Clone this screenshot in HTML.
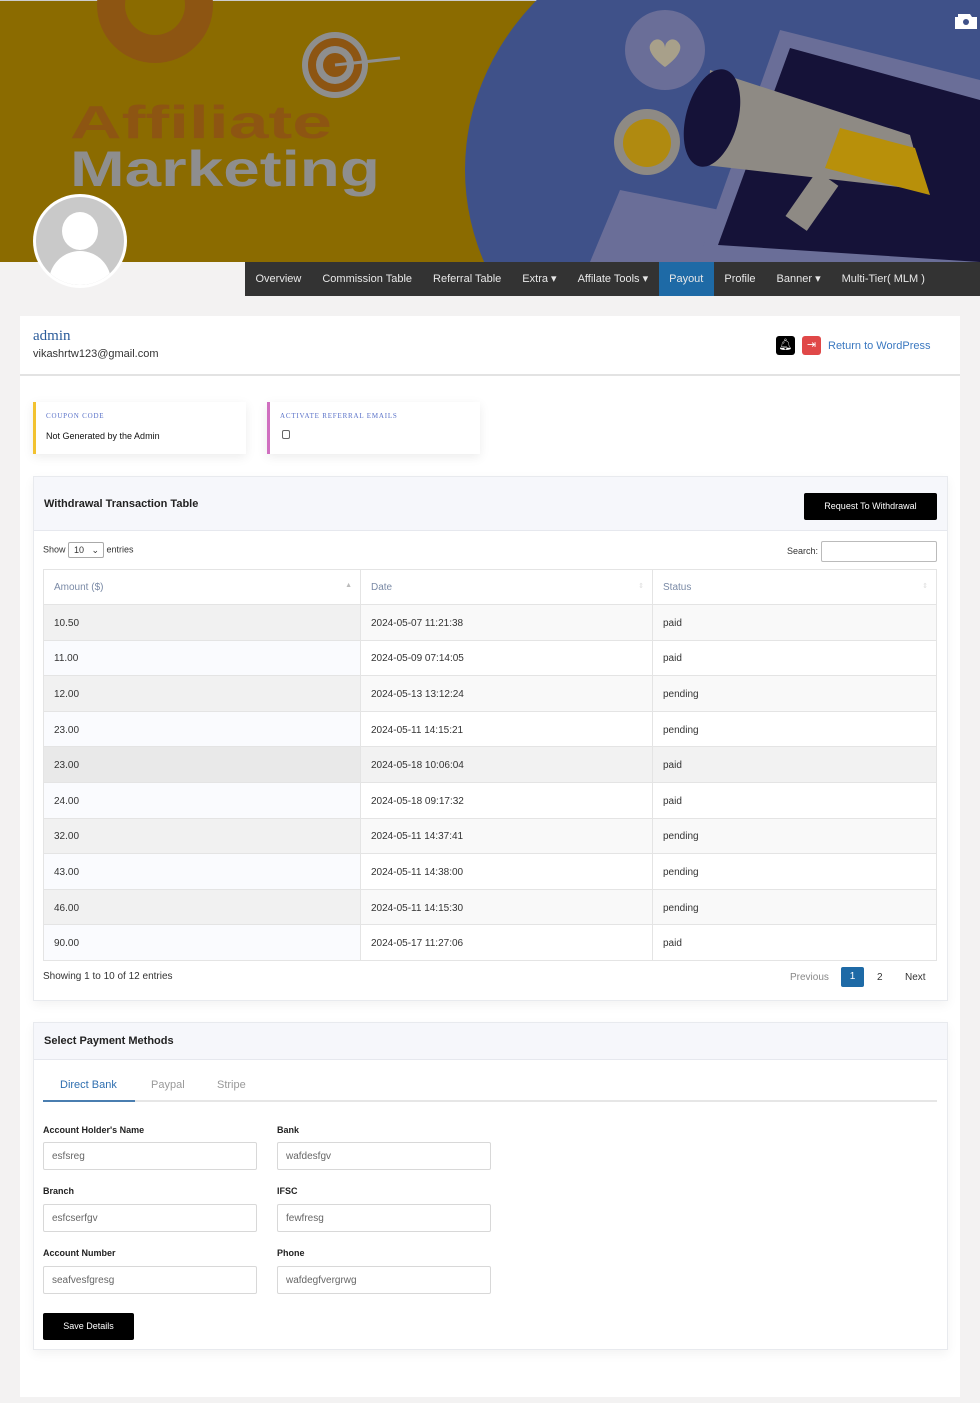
<!DOCTYPE html>
<html><head><meta charset="utf-8"><style>
*{box-sizing:border-box;margin:0;padding:0}
body{width:980px;height:1403px;background:#f3f2f2;font-family:"Liberation Sans",sans-serif;color:#222;position:relative;overflow:hidden}
.abs{position:absolute}
.nav{position:absolute;left:245px;top:262px;width:735px;height:34px;background:#333;display:flex;font-size:11px;color:#e8e8e8}
.nav div{padding:0 10.5px;line-height:35px;white-space:nowrap}
.nav .act{background:#1e6aa6}
.card{position:absolute;background:#fff}
.panel{position:absolute;background:#fff;border:1px solid #e8eaee;box-shadow:0 4px 10px rgba(0,0,0,.05)}
.ph{background:#f6f7fb;border-bottom:1px solid #e6e8ee;font-size:11px;font-weight:bold;padding-left:10px}
table{border-collapse:collapse;position:absolute;left:43px;top:569px;width:894px;font-size:10px}
td{border:1px solid #e4e4e4;height:35.6px;padding-left:10px;padding-top:2px;color:#333}
th{border:1px solid #e4e4e4;height:35px;padding-left:10px;text-align:left;font-weight:normal;color:#7a8aa6;font-size:10px}
tr.o td{background:#f9f9f9}tr.o td:first-child{background:#f1f1f1}
tr.e td:first-child{background:#fafbfe}
tr.h td{background:#f2f2f2}tr.h td:first-child{background:#e9e9e9}
.lbl{position:absolute;font-size:9px;font-weight:bold;color:#222}
.inp{position:absolute;width:214px;height:28px;border:1px solid #d8d8d8;border-radius:2px;font-size:10px;color:#666;padding-left:8px;line-height:28px}
</style></head><body>
<svg class="abs" style="left:0;top:0" width="980" height="262" viewBox="0 0 980 262">
<rect width="980" height="262" fill="#8b6b00"/>
<rect width="980" height="1" fill="#ccc"/>
<ellipse cx="760" cy="170" rx="295" ry="260" fill="#3f5189"/>
<g fill="#8d5512"><circle cx="155" cy="5" r="58"/><circle cx="155" cy="5" r="30" fill="#8b6b00"/></g>
<circle cx="335" cy="65" r="33" fill="#8e8e8e"/><circle cx="335" cy="65" r="27" fill="#8d5512"/><circle cx="335" cy="65" r="19" fill="#8e8e8e"/><circle cx="335" cy="65" r="12" fill="#8d5512"/>
<line x1="335" y1="65" x2="400" y2="58" stroke="#8e8e8e" stroke-width="3"/>
<text x="70" y="138" textLength="262" lengthAdjust="spacingAndGlyphs" font-family="Liberation Sans" font-weight="bold" font-size="46" fill="#8d5512">Affiliate</text>
<text x="70" y="186" textLength="310" lengthAdjust="spacingAndGlyphs" font-family="Liberation Sans" font-weight="bold" font-size="50" fill="#8e8e8e">Marketing</text>
<circle cx="665" cy="50" r="40" fill="#6a6e98"/>
<path d="M650 45c5-10 15-5 15 3c0-8 10-13 15-3c3 10-15 22-15 22s-18-12-15-22z" fill="#a8a08a"/>
<polygon points="620,190 980,262 590,262" fill="#6a6e98"/>
<polygon points="780,30 980,80 980,262 700,255" fill="#6a6e98"/>
<polygon points="790,48 980,100 980,262 718,245" fill="#151238"/>
<polygon points="710,70 910,135 925,190 705,165" fill="#8e8a84"/>
<polygon points="840,128 915,148 930,195 825,168" fill="#b8900a"/>
<ellipse cx="712" cy="118" rx="26" ry="50" fill="#151238" transform="rotate(15 712 118)"/>
<circle cx="647" cy="142" r="33" fill="#8e8a84"/><circle cx="647" cy="143" r="24" fill="#b08a10"/>
<rect x="800" y="175" width="26" height="55" fill="#8e8a84" transform="rotate(35 815 200)"/>
<path d="M958 14h12l2 3h5v12h-22v-12h3z" fill="#fff"/><circle cx="966" cy="22" r="3" fill="#3f5189"/>
</svg>
<div class="abs" style="left:33px;top:194px;width:94px;height:94px;border-radius:50%;background:#fff;padding:3px"><div style="width:88px;height:88px;border-radius:50%;background:#c9c9c9;position:relative;overflow:hidden"><div class="abs" style="left:26px;top:15px;width:36px;height:38px;border-radius:50%;background:#fff"></div><div class="abs" style="left:13px;top:54px;width:62px;height:50px;border-radius:31px 31px 0 0;background:#fff"></div></div></div>
<div class="nav"><div>Overview</div><div>Commission Table</div><div>Referral Table</div><div>Extra ▾</div><div>Affilate Tools ▾</div><div class="act">Payout</div><div>Profile</div><div>Banner ▾</div><div>Multi-Tier( MLM )</div></div>
<div class="card" style="left:20px;top:316px;width:940px;height:1081px"></div>
<div class="abs" style="left:33px;top:328px;font-family:'Liberation Serif',serif;font-size:15px;color:#2a5b9a">admin</div>
<div class="abs" style="left:33px;top:348px;font-size:11px;color:#333">vikashrtw123@gmail.com</div>
<div class="abs" style="left:776px;top:336px;width:19px;height:19px;background:#000;border-radius:3px;color:#fff;font-size:11px;text-align:center;line-height:19px">🔔︎</div>
<div class="abs" style="left:802px;top:336px;width:19px;height:19px;background:#e04848;border-radius:3px;color:#fff;font-size:11px;text-align:center;line-height:19px">⇥</div>
<div class="abs" style="left:828px;top:340px;font-size:11px;color:#3a78c0">Return to WordPress</div>
<div class="abs" style="left:20px;top:374px;width:940px;height:2px;background:#e3e3e3"></div>
<div class="abs" style="left:33px;top:402px;width:213px;height:52px;background:#fff;border-left:3px solid #f2c230;box-shadow:0 3px 10px rgba(0,0,0,.08)"><div style="margin:10px 0 0 10px;font-family:'Liberation Serif',serif;font-size:7px;letter-spacing:.8px;color:#5a72c8">COUPON CODE</div><div style="margin:11px 0 0 10px;font-size:9px;color:#111">Not Generated by the Admin</div></div>
<div class="abs" style="left:267px;top:402px;width:213px;height:52px;background:#fff;border-left:3px solid #d070c0;box-shadow:0 3px 10px rgba(0,0,0,.08)"><div style="margin:10px 0 0 10px;font-family:'Liberation Serif',serif;font-size:7px;letter-spacing:.8px;color:#5a72c8">ACTIVATE REFERRAL EMAILS</div><div style="margin:10px 0 0 12px;width:8px;height:9px;border:1px solid #666;border-radius:2px"></div></div>
<div class="panel" style="left:33px;top:476px;width:915px;height:525px"><div class="ph" style="height:54px;line-height:54px">Withdrawal Transaction Table</div></div>
<div class="abs" style="left:804px;top:493px;width:133px;height:27px;background:#000;border-radius:2px;color:#fff;font-size:9px;text-align:center;line-height:27px">Request To Withdrawal</div>
<div class="abs" style="left:43px;top:542px;font-size:9px;color:#333">Show <span style="display:inline-block;width:36px;height:16px;border:1px solid #aaa;border-radius:2px;padding-left:5px;line-height:14px;vertical-align:middle">10 &nbsp;&nbsp;⌄</span> entries</div>
<div class="abs" style="left:787px;top:546px;font-size:9px;color:#333">Search:</div>
<div class="abs" style="left:821px;top:541px;width:116px;height:21px;border:1px solid #bbb;border-radius:2px"></div>
<table>
<tr><th style="width:317px">Amount ($)<span style="float:right;margin-right:8px;color:#bbb;font-size:7px">▲</span></th><th style="width:292px">Date<span style="float:right;margin-right:8px;color:#ddd;font-size:7px">⇕</span></th><th>Status<span style="float:right;margin-right:8px;color:#ddd;font-size:7px">⇕</span></th></tr>
<tr class="o"><td>10.50</td><td>2024-05-07 11:21:38</td><td>paid</td></tr>
<tr class="e"><td>11.00</td><td>2024-05-09 07:14:05</td><td>paid</td></tr>
<tr class="o"><td>12.00</td><td>2024-05-13 13:12:24</td><td>pending</td></tr>
<tr class="e"><td>23.00</td><td>2024-05-11 14:15:21</td><td>pending</td></tr>
<tr class="h"><td>23.00</td><td>2024-05-18 10:06:04</td><td>paid</td></tr>
<tr class="e"><td>24.00</td><td>2024-05-18 09:17:32</td><td>paid</td></tr>
<tr class="o"><td>32.00</td><td>2024-05-11 14:37:41</td><td>pending</td></tr>
<tr class="e"><td>43.00</td><td>2024-05-11 14:38:00</td><td>pending</td></tr>
<tr class="o"><td>46.00</td><td>2024-05-11 14:15:30</td><td>pending</td></tr>
<tr class="e"><td>90.00</td><td>2024-05-17 11:27:06</td><td>paid</td></tr>
</table>
<div class="abs" style="left:43px;top:971px;font-size:10px;color:#333">Showing 1 to 10 of 12 entries</div>
<div class="abs" style="left:790px;top:972px;font-size:10px;color:#888">Previous</div>
<div class="abs" style="left:841px;top:967px;width:23px;height:20px;background:#1e6aa6;border-radius:2px;color:#fff;font-size:10px;text-align:center;line-height:20px">1</div>
<div class="abs" style="left:877px;top:972px;font-size:10px;color:#333">2</div>
<div class="abs" style="left:905px;top:972px;font-size:10px;color:#333">Next</div>
<div class="panel" style="left:33px;top:1022px;width:915px;height:328px"><div class="ph" style="height:37px;line-height:37px">Select Payment Methods</div></div>
<div class="abs" style="left:60px;top:1079px;font-size:11px;color:#2f6fb0">Direct Bank</div>
<div class="abs" style="left:151px;top:1079px;font-size:11px;color:#999">Paypal</div>
<div class="abs" style="left:217px;top:1079px;font-size:11px;color:#999">Stripe</div>
<div class="abs" style="left:43px;top:1100px;width:894px;height:2px;background:#e6e6e6"></div>
<div class="abs" style="left:43px;top:1100px;width:92px;height:2px;background:#4a7eb0"></div>
<div class="lbl" style="left:43px;top:1125px">Account Holder's Name</div><div class="lbl" style="left:277px;top:1125px">Bank</div>
<div class="inp" style="left:43px;top:1142px">esfsreg</div><div class="inp" style="left:277px;top:1142px">wafdesfgv</div>
<div class="lbl" style="left:43px;top:1186px">Branch</div><div class="lbl" style="left:277px;top:1186px">IFSC</div>
<div class="inp" style="left:43px;top:1204px">esfcserfgv</div><div class="inp" style="left:277px;top:1204px">fewfresg</div>
<div class="lbl" style="left:43px;top:1248px">Account Number</div><div class="lbl" style="left:277px;top:1248px">Phone</div>
<div class="inp" style="left:43px;top:1266px">seafvesfgresg</div><div class="inp" style="left:277px;top:1266px">wafdegfvergrwg</div>
<div class="abs" style="left:43px;top:1313px;width:91px;height:27px;background:#000;border-radius:2px;color:#fff;font-size:9px;text-align:center;line-height:27px">Save Details</div>
</body></html>
